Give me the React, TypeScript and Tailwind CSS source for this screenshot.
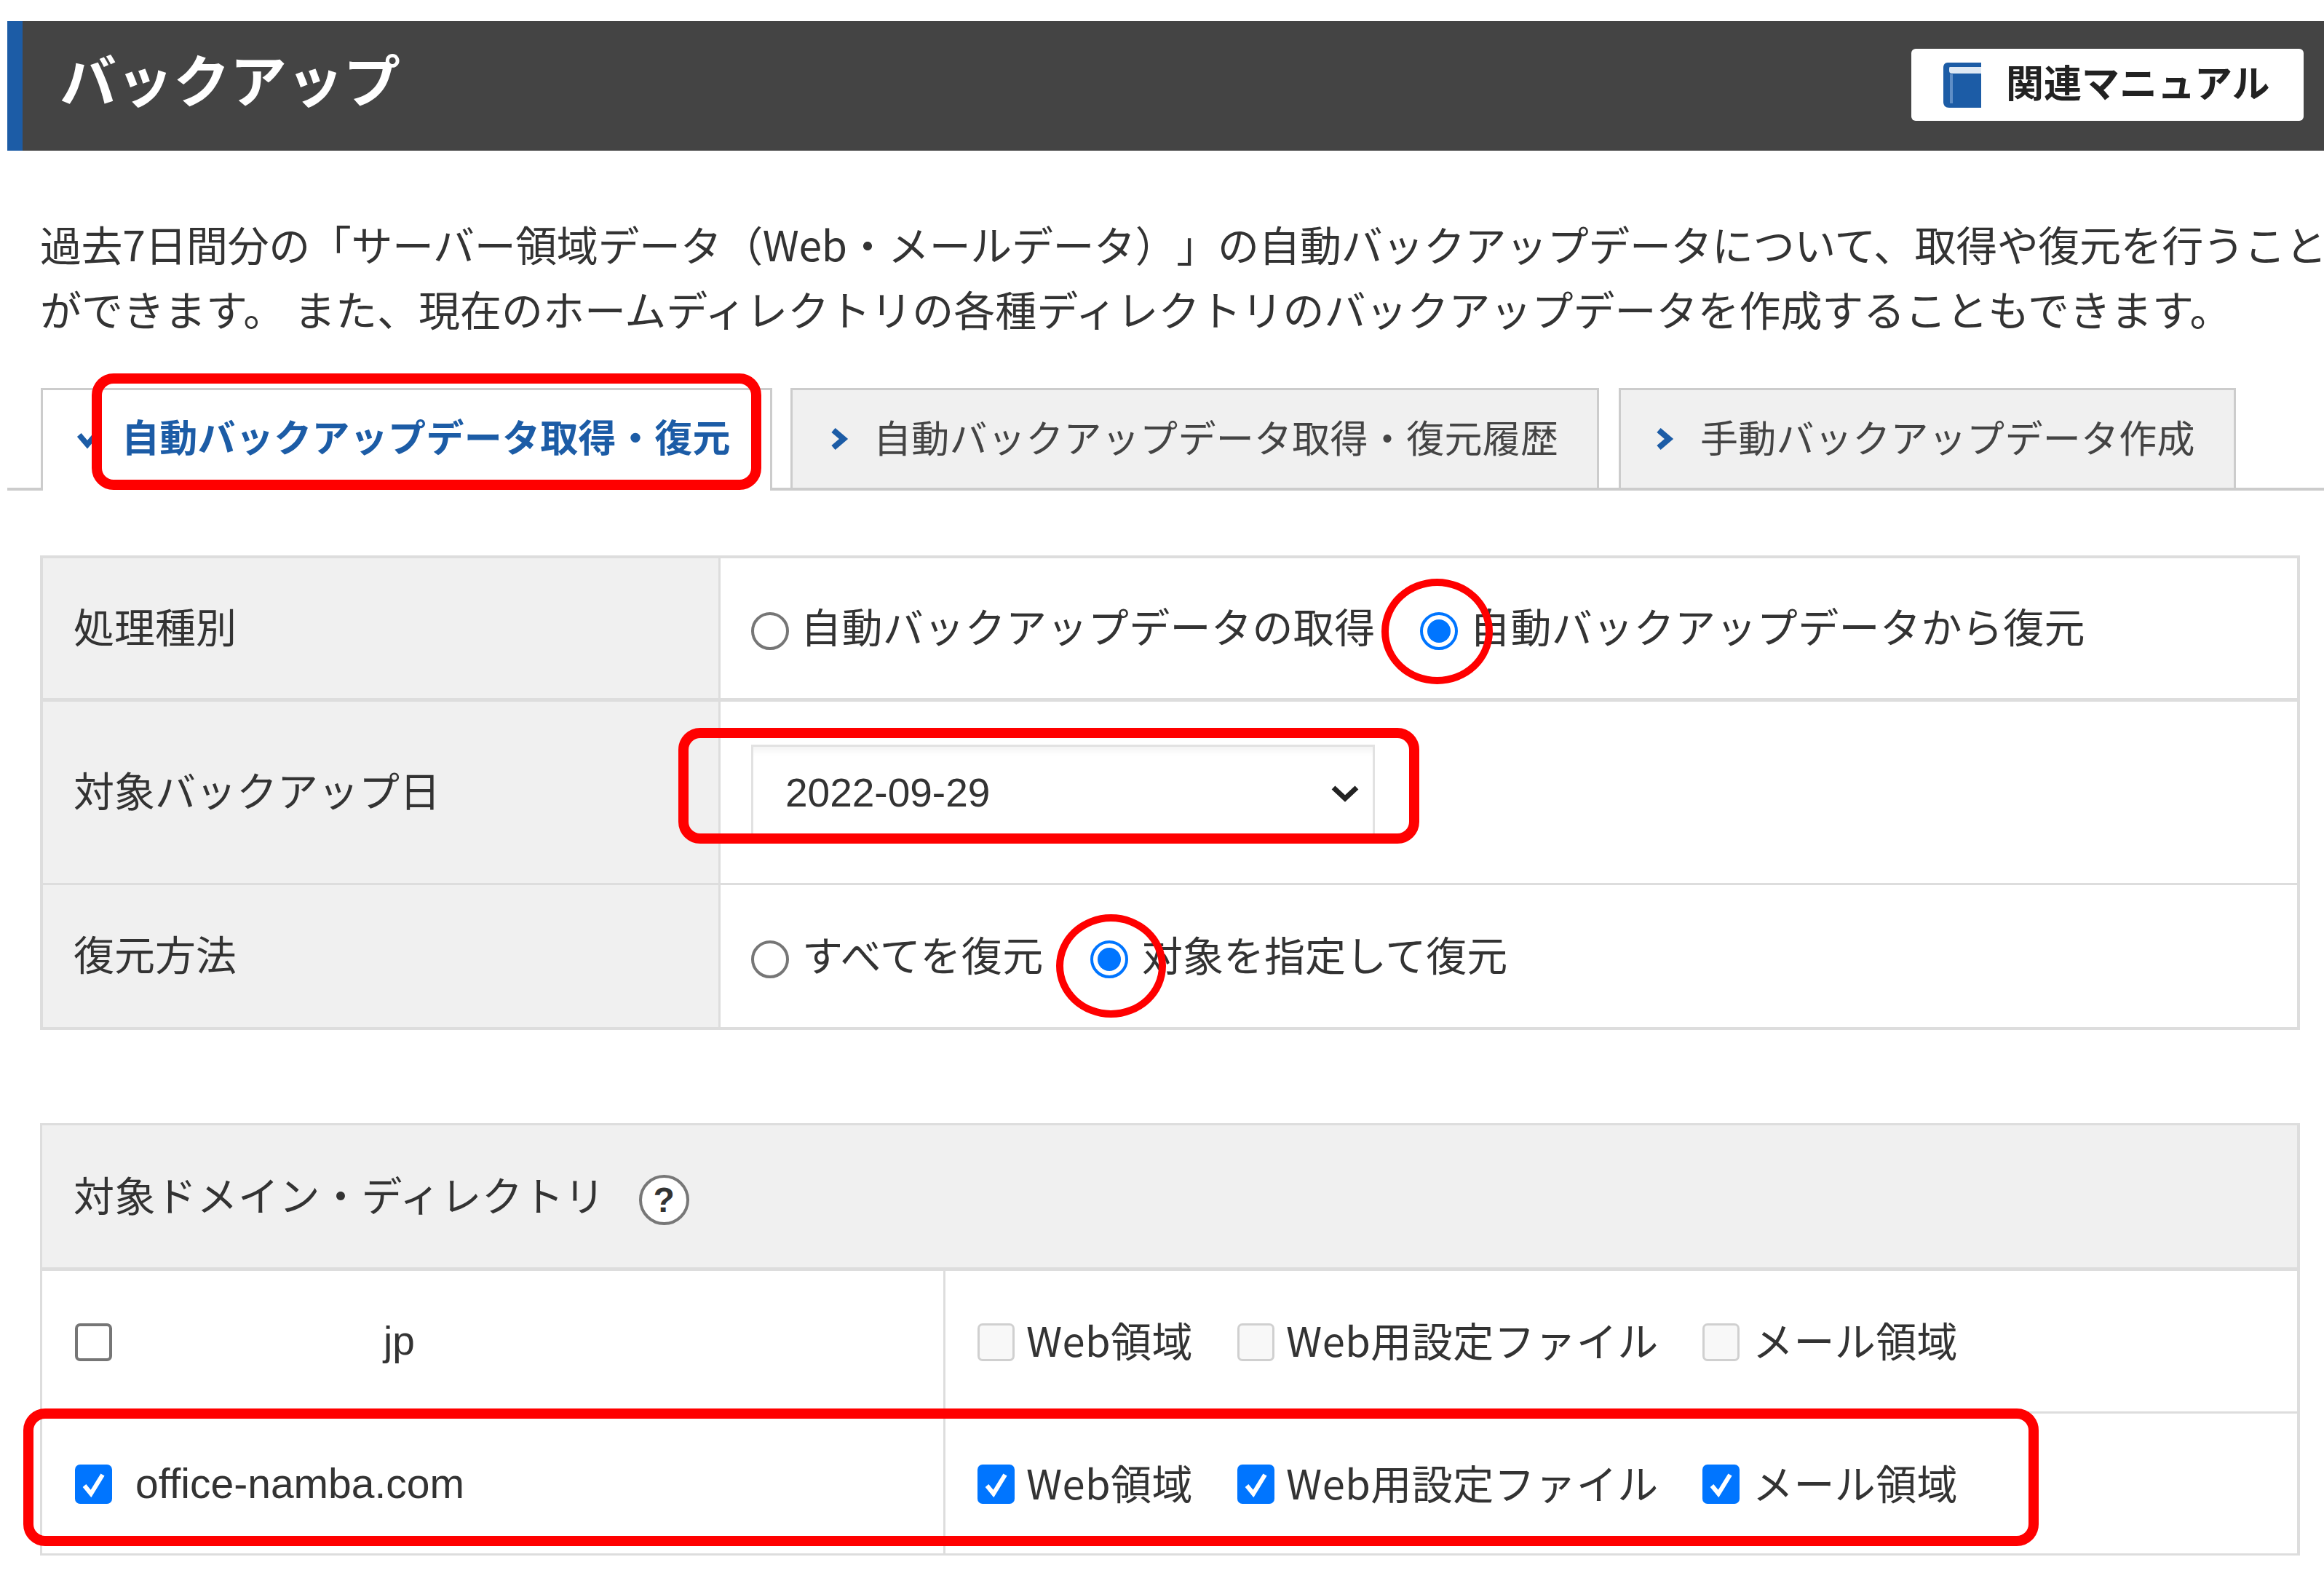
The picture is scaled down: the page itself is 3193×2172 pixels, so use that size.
const FONT = "font-['Noto_Sans_CJK_JP','Liberation_Sans',sans-serif]";

const BookIcon = () => (
  <svg viewBox="0 0 52 62" className="w-[52px] h-[62px] shrink-0">
    <path d="M6 0H52V62H8C3 62 0 59 0 54V7C0 3 2 0 6 0Z" fill="#1c5ca6" />
    <path d="M9 6H52V15H11C9 15 8 13 8 11C8 8 8 6 9 6Z" fill="#dfe9f4" />
    <rect x="9" y="16" width="4" height="40" fill="#5f8ec6" />
  </svg>
);

const Chevron = ({ down = false }: { down?: boolean }) => (
  <svg viewBox="0 0 28 32" className={down ? 'w-[34px] h-[30px] rotate-90' : 'w-[28px] h-[34px]'}>
    <path d="M6 4L20 16L6 28" fill="none" stroke="#1c5ca6" strokeWidth="8" />
  </svg>
);

const Radio = ({ checked = false }: { checked?: boolean }) =>
  checked ? (
    <span className="w-[52px] h-[52px] mt-[8px] rounded-full border-[4px] border-[#0075ff] bg-white flex items-center justify-center shrink-0">
      <span className="w-[32px] h-[32px] rounded-full bg-[#0075ff]" />
    </span>
  ) : (
    <span className="w-[52px] h-[52px] mt-[8px] rounded-full border-[4px] border-[#767676] bg-white shrink-0" />
  );

const Checkbox = ({ checked = false, disabled = false }: { checked?: boolean; disabled?: boolean }) => {
  if (checked) {
    return (
      <span className="w-[51px] h-[54px] mt-[2px] rounded-[7px] bg-[#0075ff] flex items-center justify-center shrink-0">
        <svg viewBox="0 0 40 40" className="w-[40px] h-[40px]">
          <path d="M7 22L16 33L32 7" fill="none" stroke="#fff" strokeWidth="6" />
        </svg>
      </span>
    );
  }
  return (
    <span
      className={
        disabled
          ? 'w-[51px] h-[52px] mt-[2px] rounded-[7px] border-[3px] border-[#d0d0d0] bg-[#f8f8f8] shrink-0'
          : 'w-[51px] h-[52px] mt-[2px] rounded-[7px] border-[4px] border-[#767676] bg-white shrink-0'
      }
    />
  );
};

const Mark = ({ className }: { className: string }) => (
  <div className={`absolute border-[#ff0000] pointer-events-none ${className}`} />
);

const CheckGroup = ({ checked }: { checked: boolean }) => (
  <div className="flex items-center">
    <Checkbox checked={checked} disabled={!checked} />
    <span className="ml-[16px] w-[290px] -mt-[5px] tracking-[0.4px]">Web領域</span>
    <Checkbox checked={checked} disabled={!checked} />
    <span className="ml-[16px] w-[572px] -mt-[5px] tracking-[0.5px] whitespace-nowrap">Web用設定ファイル</span>
    <Checkbox checked={checked} disabled={!checked} />
    <span className="ml-[18px] -mt-[5px] tracking-[0.4px]">メール領域</span>
  </div>
);

export default function App() {
  return (
    <div className={`relative w-[3193px] h-[2172px] overflow-hidden bg-white text-[#333] text-[56px] ${FONT}`}>
      <div className="pt-[29px] pl-[10px]">
        <header className="h-[178px] flex items-center justify-between bg-[#444] border-l-[21px] border-[#1c5ca6] pl-[51px] pr-[28px]">
          <h1 className="text-[78px] font-bold text-white leading-none -mt-[22px]">バックアップ</h1>
          <button className="w-[539px] h-[99px] -mt-[3px] flex items-center pl-[44px] bg-white rounded-[6px] text-[52px] font-bold text-[#222]">
            <BookIcon />
            <span className="ml-[34px] -mt-[9px] leading-none">関連マニュアル</span>
          </button>
        </header>

        <p className="mt-[83px] ml-[45px] w-[3200px] leading-[89px] text-[57px] whitespace-nowrap [text-spacing-trim:space-all]">
          <span className="tracking-[-0.4px]">過去7日間分の「サーバー領域データ（Web・メールデータ）」の自動バックアップデータについて、取得や復元を行うこと</span>
          <br />
          ができます。 また、現在のホームディレクトリの各種ディレクトリのバックアップデータを作成することもできます。
        </p>

        <nav className="mt-[65px] h-[141px] flex items-end pl-[46px] border-b-[4px] border-[#ccc] text-[52px]">
          <a className="w-[1005px] h-[141px] -mb-[4px] flex items-center pl-[44px] bg-white border-[3px] border-b-0 border-[#ccc] font-bold text-[#1c5ca6]">
            <Chevron down />
            <span className="ml-[30px] -mt-[13px] tracking-[0.3px] whitespace-nowrap">自動バックアップデータ取得・復元</span>
          </a>
          <a className="ml-[25px] w-[1111px] h-[137px] flex items-center pl-[50px] bg-[#f0f0f0] border-[3px] border-b-0 border-[#ccc] text-[#444]">
            <Chevron />
            <span className="ml-[33px] -mt-[6px] tracking-[0.3px] whitespace-nowrap">自動バックアップデータ取得・復元履歴</span>
          </a>
          <a className="ml-[27px] w-[848px] h-[137px] flex items-center pl-[46px] bg-[#f0f0f0] border-[3px] border-b-0 border-[#ccc] text-[#444]">
            <Chevron />
            <span className="ml-[35px] -mt-[6px] tracking-[0.3px] whitespace-nowrap">手動バックアップデータ作成</span>
          </a>
        </nav>

        <section className="mt-[89px] ml-[45px] w-[3105px] border-[4px] border-[#ddd]">
          <div className="flex h-[197px] border-b-[5px] border-[#ddd]">
            <div className="w-[931px] flex items-center pl-[42px] pb-[9px] bg-[#f0f0f0] border-r-[3px] border-[#ddd]">処理種別</div>
            <div className="flex items-center pl-[42px]">
              <Radio />
              <span className="ml-[16px] w-[851px] -mt-[8px] tracking-[0.4px] whitespace-nowrap">自動バックアップデータの取得</span>
              <Radio checked />
              <span className="ml-[16px] -mt-[8px] tracking-[0.4px] whitespace-nowrap">自動バックアップデータから復元</span>
            </div>
          </div>
          <div className="flex h-[252px] border-b-[3px] border-[#ddd]">
            <div className="w-[931px] flex items-center pl-[42px] pb-[9px] bg-[#f0f0f0] border-r-[3px] border-[#ddd]">対象バックアップ日</div>
            <div className="flex items-center pl-[42px]">
              <div className="w-[857px] h-[134px] mt-[2px] flex items-center justify-between pl-[44px] pr-[18px] border-[3px] border-[#e2e2e2] shadow-[inset_0_12px_8px_-6px_#f4f4f4] font-['Liberation_Sans',sans-serif] text-[55px]">
                <span>2022-09-29</span>
                <svg viewBox="0 0 40 24" className="w-[40px] h-[24px]">
                  <path d="M4 4L20 19L36 4" fill="none" stroke="#222" strokeWidth="7" />
                </svg>
              </div>
            </div>
          </div>
          <div className="flex h-[195px]">
            <div className="w-[931px] flex items-center pl-[42px] pb-[9px] bg-[#f0f0f0] border-r-[3px] border-[#ddd]">復元方法</div>
            <div className="flex items-center pl-[42px]">
              <Radio />
              <span className="ml-[18px] w-[396px] -mt-[8px] tracking-[0.5px] whitespace-nowrap">すべてを復元</span>
              <Radio checked />
              <span className="ml-[19px] -mt-[8px] whitespace-nowrap">対象を指定して復元</span>
            </div>
          </div>
        </section>

        <section className="mt-[128px] ml-[45px] w-[3105px] border-[3px] border-[#ddd] border-r-[4px]">
          <div className="h-[200px] flex items-center pl-[43px] bg-[#f0f0f0] border-b-[5px] border-[#ddd]">
            <span className="-mt-[7px] tracking-[0.5px] whitespace-nowrap">対象ドメイン・ディレクトリ</span>
            <span className="ml-[46px] mt-[10px] w-[69px] h-[69px] rounded-full bg-white border-[4px] border-[#777] flex items-center justify-center text-[48px] font-bold font-['Liberation_Sans',sans-serif] leading-none">?</span>
          </div>
          <div className="flex h-[196px] border-b-[3px] border-[#ddd]">
            <div className="w-[1241px] flex items-center pl-[45px] border-r-[3px] border-[#ddd]">
              <Checkbox />
              <span className="ml-[373px] font-['Liberation_Sans',sans-serif] text-[55px]">jp</span>
            </div>
            <div className="flex items-center pl-[44px]">
              <CheckGroup checked={false} />
            </div>
          </div>
          <div className="flex h-[192px]">
            <div className="w-[1241px] flex items-center pl-[45px] border-r-[3px] border-[#ddd]">
              <Checkbox checked />
              <span className="ml-[32px] mt-[2px] font-['Liberation_Sans',sans-serif] text-[57px]">office-namba.com</span>
            </div>
            <div className="flex items-center pl-[44px]">
              <CheckGroup checked />
            </div>
          </div>
        </section>
      </div>

      {/* annotations drawn over the screenshot */}
      <Mark className="left-[126px] top-[513px] w-[920px] h-[160px] border-[14px] rounded-[30px]" />
      <Mark className="left-[932px] top-[1000px] w-[1018px] h-[159px] border-[14px] rounded-[30px]" />
      <Mark className="left-[1898px] top-[795px] w-[153px] h-[145px] border-[10px] rounded-[50%]" />
      <Mark className="left-[1451px] top-[1256px] w-[151px] h-[142px] border-[10px] rounded-[50%]" />
      <Mark className="left-[32px] top-[1935px] w-[2769px] h-[189px] border-[14px] rounded-[30px]" />
    </div>
  );
}
